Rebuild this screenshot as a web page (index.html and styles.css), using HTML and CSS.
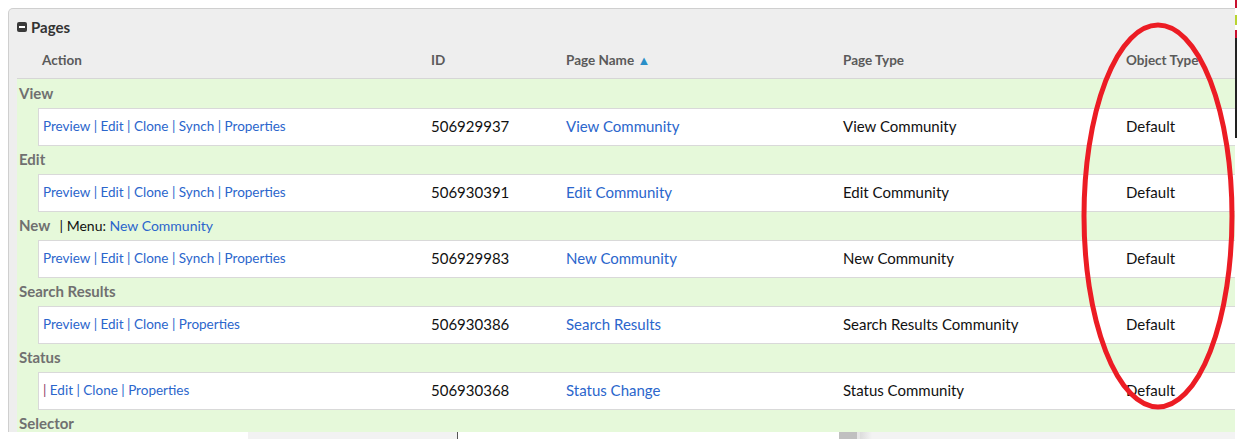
FILE: index.html
```html
<!DOCTYPE html>
<html>
<head>
<meta charset="utf-8">
<link rel="stylesheet" href="styles.css">
</head>
<body>
<div class="screen">
  <div class="main">
    <div class="panel">
      <div class="panel-title">
        <span class="toggle"></span>
        <span>Pages</span>
      </div>
      <div class="table">
        <div class="head">
          <div class="c1">Action</div>
          <div class="c2">ID</div>
          <div class="c3">Page Name <span class="sort">&#9650;</span></div>
          <div class="c4">Page Type</div>
          <div class="c5">Object Type</div>
        </div>

        <div class="group first">View</div>
        <div class="row">
          <div class="c1 links"><a>Preview</a> | <a>Edit</a> | <a>Clone</a> | <a>Synch</a> | <a>Properties</a></div>
          <div class="c2">506929937</div>
          <div class="c3"><a>View Community</a></div>
          <div class="c4">View Community</div>
          <div class="c5">Default</div>
        </div>

        <div class="group">Edit</div>
        <div class="row">
          <div class="c1 links"><a>Preview</a> | <a>Edit</a> | <a>Clone</a> | <a>Synch</a> | <a>Properties</a></div>
          <div class="c2">506930391</div>
          <div class="c3"><a>Edit Community</a></div>
          <div class="c4">Edit Community</div>
          <div class="c5">Default</div>
        </div>

        <div class="group">New <span class="menu">| Menu: <a>New Community</a></span></div>
        <div class="row">
          <div class="c1 links"><a>Preview</a> | <a>Edit</a> | <a>Clone</a> | <a>Synch</a> | <a>Properties</a></div>
          <div class="c2">506929983</div>
          <div class="c3"><a>New Community</a></div>
          <div class="c4">New Community</div>
          <div class="c5">Default</div>
        </div>

        <div class="group">Search Results</div>
        <div class="row">
          <div class="c1 links"><a>Preview</a> | <a>Edit</a> | <a>Clone</a> | <a>Properties</a></div>
          <div class="c2">506930386</div>
          <div class="c3"><a>Search Results</a></div>
          <div class="c4">Search Results Community</div>
          <div class="c5">Default</div>
        </div>

        <div class="group">Status</div>
        <div class="row">
          <div class="c1 links"><span class="pipe">|</span> <a>Edit</a> | <a>Clone</a> | <a>Properties</a></div>
          <div class="c2">506930368</div>
          <div class="c3"><a>Status Change</a></div>
          <div class="c4">Status Community</div>
          <div class="c5">Default</div>
        </div>

        <div class="group">Selector</div>
      </div>
    </div>
    <div class="below">
      <div class="b-white1"></div>
      <div class="b-grey1"></div>
      <div class="b-white2"></div>
      <div class="b-grey2"></div>
      <div class="b-gap"></div>
      <div class="b-grad"></div>
    </div>
  </div>
  <div class="edge">
    <div class="edge-red"></div>
    <div class="edge-space"></div>
    <div class="edge-dots"></div>
    <div class="edge-space2"></div>
    <div class="edge-red2"></div>
    <div class="edge-dark"></div>
  </div>
</div>
<svg class="annotation" width="170" height="400" viewBox="0 0 170 400">
  <ellipse cx="79" cy="196" rx="74" ry="191" fill="none" stroke="#ec1c24" stroke-width="5"/>
</svg>
</body>
</html>
```

FILE: styles.css
```css
html, body {
  margin: 0;
  padding: 0;
}
body {
  width: 1237px;
  height: 439px;
  overflow: hidden;
  background: #ffffff;
  font-family: Lato, "Open Sans", "Liberation Sans", sans-serif;
  position: relative;
}
.screen {
  display: flex;
  width: 1237px;
  height: 439px;
}
.main {
  width: 1235px;
  overflow: hidden;
  display: flex;
  flex-direction: column;
}
.panel {
  margin: 8px 0 0 8px;
  width: 1260px;
  height: 424px;
  flex: none;
  box-sizing: border-box;
  background: #eeeeee;
  border: 1px solid #cfcfcf;
  border-bottom: none;
  border-radius: 5px 0 0 0;
  overflow: hidden;
}
.panel-title {
  height: 35px;
  display: flex;
  align-items: center;
  gap: 4px;
  padding-left: 8px;
  font-size: 15px;
  font-weight: 700;
  color: #333333;
}
.toggle {
  width: 10px;
  height: 10px;
  border-radius: 2px;
  background: #3a3a3a;
  position: relative;
  flex: none;
}
.toggle::after {
  content: "";
  position: absolute;
  left: 2px;
  right: 2px;
  top: 4px;
  height: 2px;
  background: #ffffff;
}
.table {
  margin-left: 8px;
}
.head, .row {
  display: grid;
  grid-template-columns: 388px 135px 277px 283px 1fr;
}
.head {
  height: 34px;
  line-height: 32px;
  padding-left: 21px;
  border-bottom: 1px solid #d6d6d6;
  font-size: 13.5px;
  font-weight: 700;
  color: #5a5a5a;
}
.head > div {
  padding-left: 5px;
}
.head > .c1 {
  padding-left: 4px;
}
.sort {
  color: #2a8fc8;
  font-size: 13px;
  vertical-align: 0;
}
.group {
  height: 28px;
  line-height: 27px;
  background: #e6f9da;
  padding-left: 2px;
  font-size: 15px;
  font-weight: 700;
  color: #707070;
}
.group.first {
  height: 29px;
  line-height: 28px;
}
.menu {
  margin-left: 6px;
  font-size: 14px;
  font-weight: 400;
  color: #111111;
}
.row {
  background: #e6f9da;
  padding-left: 21px;
}
.row > div {
  background: #ffffff;
  border-top: 1px solid #d9d9d9;
  border-bottom: 1px solid #d9d9d9;
  height: 36px;
  line-height: 35px;
  padding-left: 5px;
  font-size: 15px;
  color: #111111;
}
.row > .c1 {
  border-left: 1px solid #d9d9d9;
  padding-left: 4px;
}
.row > .links {
  font-size: 13.5px;
  color: #2b66cc;
}
.pipe {
  color: #8a3a6a;
}
a {
  color: #2b66cc;
  text-decoration: none;
}
.below {
  display: flex;
  height: 7px;
  flex: none;
}
.b-white1 { width: 248px; }
.b-grey1 {
  width: 209px;
  background: #f2f2f2;
  border-right: 1px solid #555555;
}
.b-white2 { width: 381px; }
.b-grey2 { width: 18px; background: #c0c0c0; }
.b-gap { width: 3px; background: #e6e6e6; }
.b-grad {
  flex: 1;
  background: linear-gradient(to right, #dcdcdc, #f3f3f3 12px, #f3f3f3);
}
.edge {
  width: 2px;
  display: flex;
  flex-direction: column;
}
.edge-red { height: 8px; background: #c8102e; }
.edge-space { height: 7px; }
.edge-dots { height: 10px; background: #b8d430; }
.edge-space2 { height: 5px; }
.edge-red2 { height: 8px; background: #c8102e; }
.edge-dark { height: 100px; background: #222222; }
.annotation {
  position: absolute;
  left: 1079px;
  top: 20px;
}
```
